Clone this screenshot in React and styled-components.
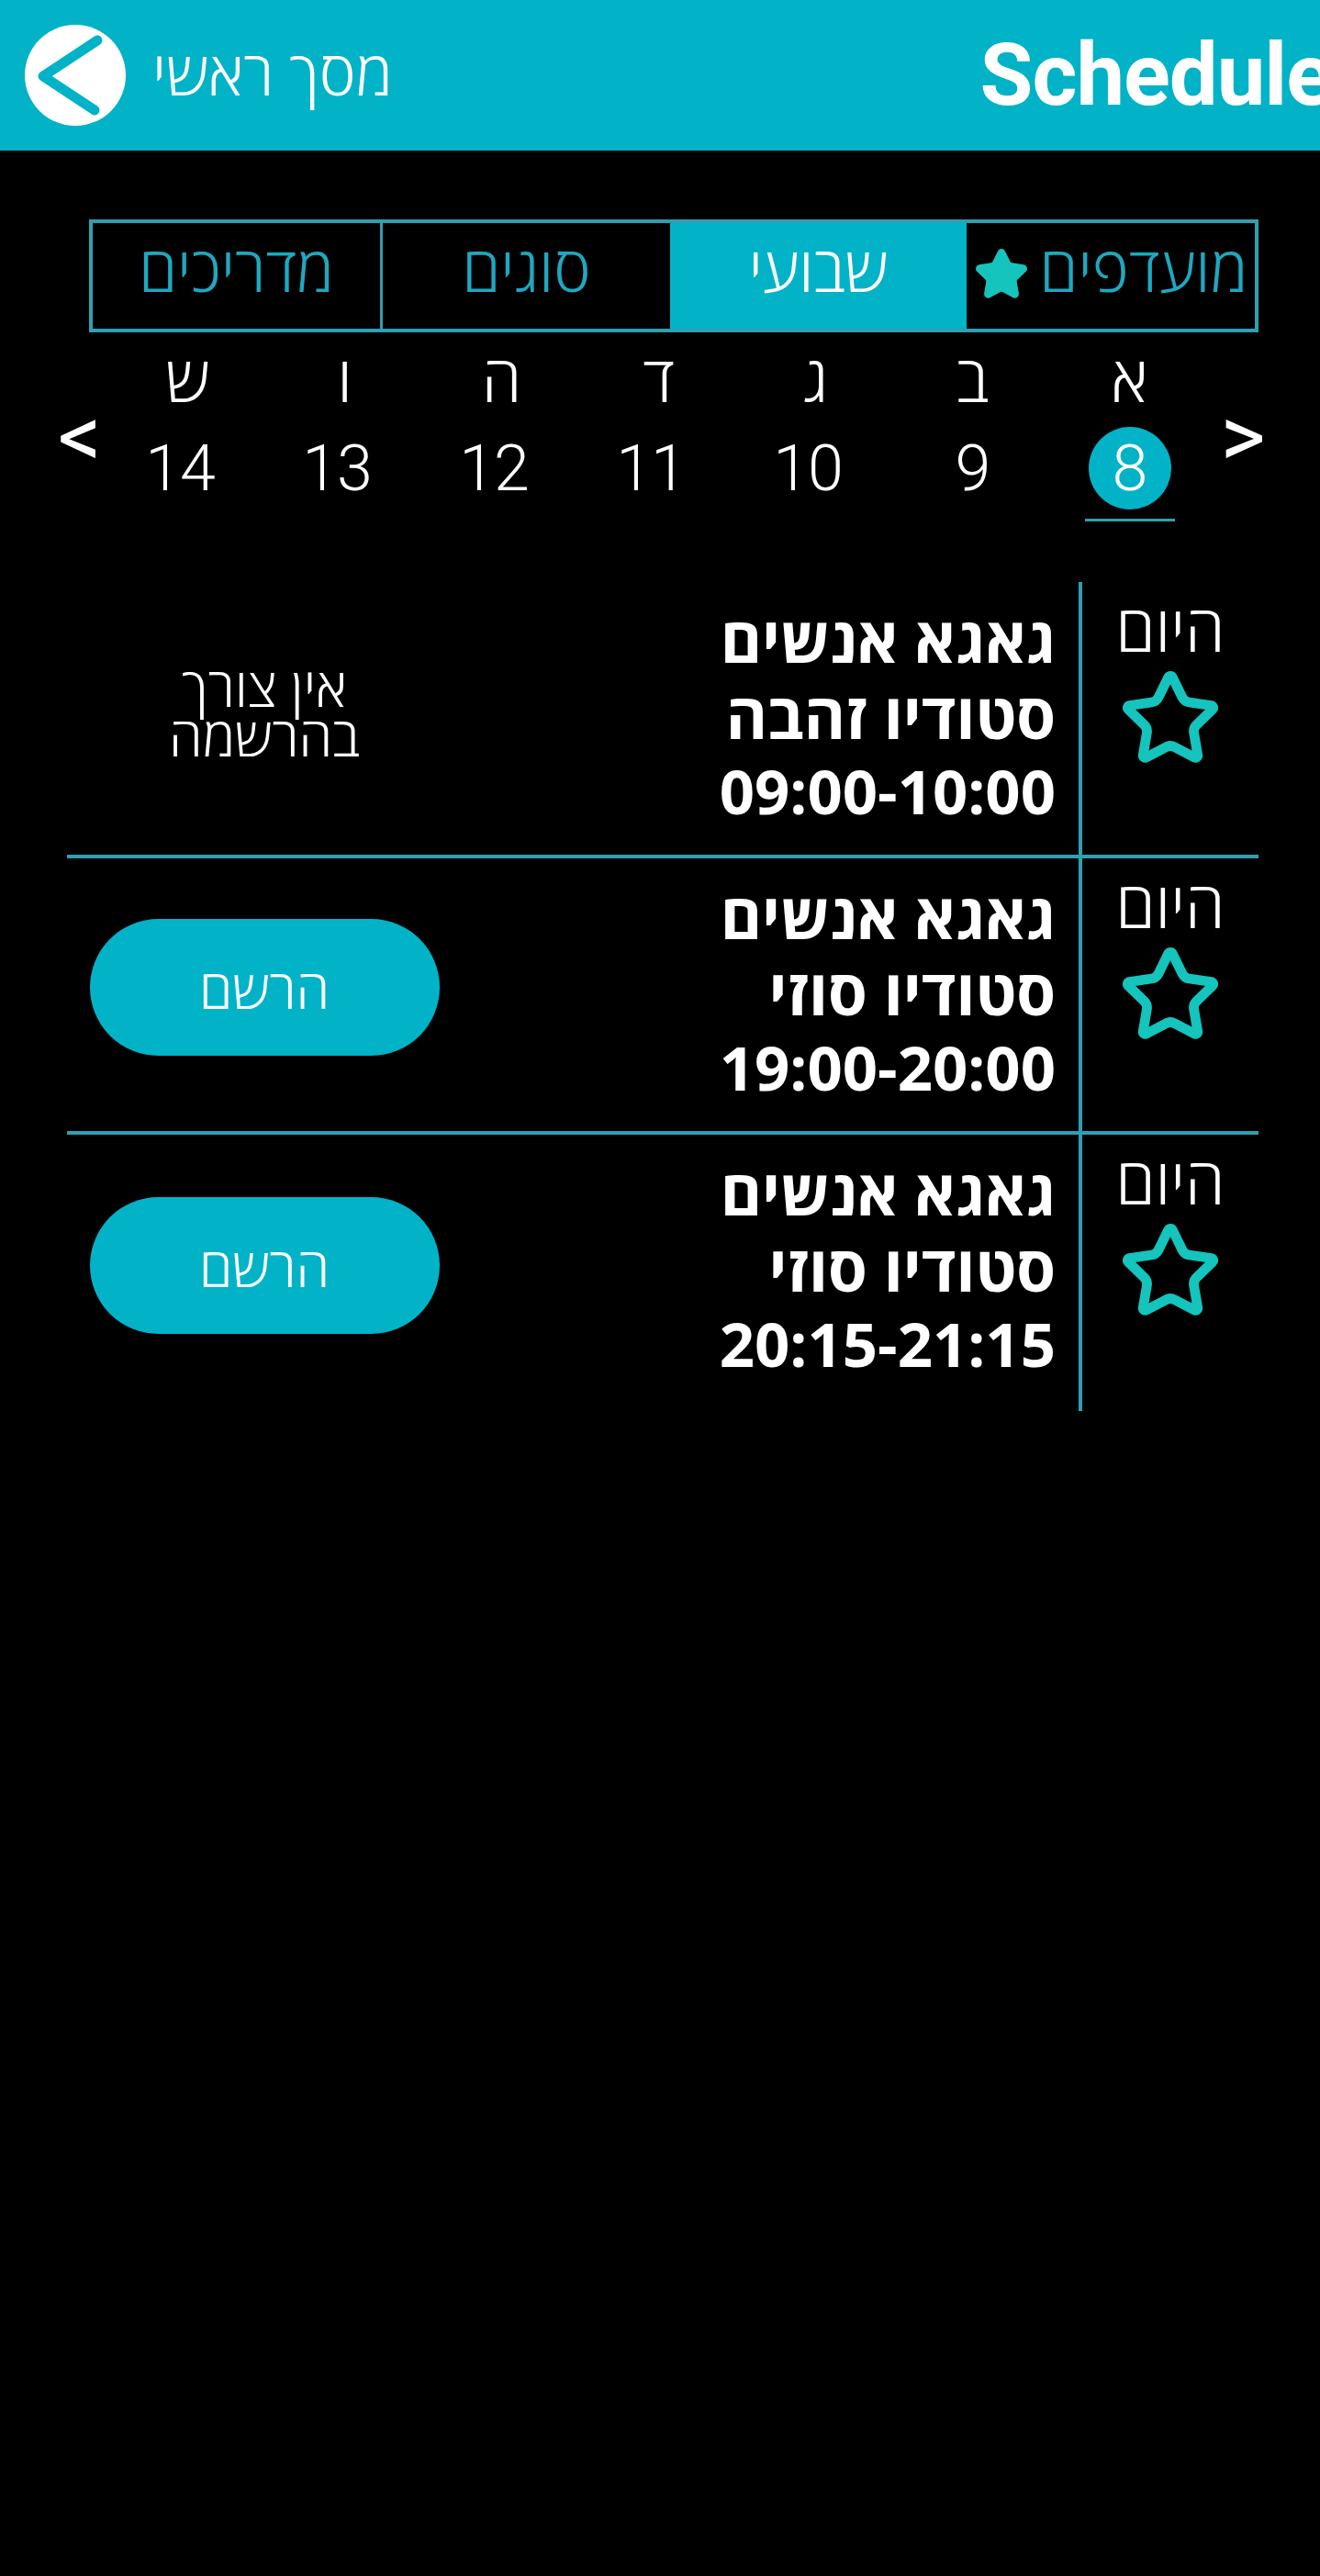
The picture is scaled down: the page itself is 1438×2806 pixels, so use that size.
import styled, { createGlobalStyle } from "styled-components"
import { Star } from "lucide-react"

const CYAN = "#02b3c7"
const LINE = "#2f9fb3"
const STAR = "#14c4bd"
const HEBREW = `"Open Sans", "Noto Sans", sans-serif`

const GlobalStyle = createGlobalStyle`
    html, body {
        margin: 0;
        background: #000;
        color: #fff;
    }
    body {
        font-family: ${HEBREW};
    }
`

const days = [
    { letter: "א", date: 8, today: true },
    { letter: "ב", date: 9 },
    { letter: "ג", date: 10 },
    { letter: "ד", date: 11 },
    { letter: "ה", date: 12 },
    { letter: "ו", date: 13 },
    { letter: "ש", date: 14 },
]

const classes = [
    { name: "גאגא אנשים", studio: "סטודיו זהבה", time: "09:00-10:00", free: true },
    { name: "גאגא אנשים", studio: "סטודיו סוזי", time: "19:00-20:00" },
    { name: "גאגא אנשים", studio: "סטודיו סוזי", time: "20:15-21:15" },
]

export default function App() {
    return (
        <Page>
            <GlobalStyle />
            <Header>
                <BackLink>
                    <BackCircle>
                        <svg width="110" height="110" viewBox="0 0 110 110">
                            <path d="M79 17 L20 56 L76 93" fill="none" stroke={CYAN} strokeWidth="11" strokeLinecap="round" strokeLinejoin="round" />
                        </svg>
                    </BackCircle>
                    <BackLabel>מסך ראשי</BackLabel>
                </BackLink>
                <Title>Schedule</Title>
            </Header>

            <Tabs>
                <Tab>
                    מועדפים
                    <TabStar size={60} fill={STAR} color={STAR} strokeWidth={2.4} />
                </Tab>
                <Tab $active>שבועי</Tab>
                <Tab>סוגים</Tab>
                <Tab>מדריכים</Tab>
            </Tabs>

            <Week>
                <Arrow>&gt;</Arrow>
                <Days>
                    {days.map(day => (
                        <Day key={day.date}>
                            <DayLetter>{day.letter}</DayLetter>
                            <DayDate $today={day.today} $wide={day.date > 9}>{day.date}</DayDate>
                            <DayMark $today={day.today} />
                        </Day>
                    ))}
                </Days>
                <Arrow>&lt;</Arrow>
            </Week>

            <List>
                {classes.map(item => (
                    <Row key={item.time}>
                        <TodayCell>
                            <TodayLabel>היום</TodayLabel>
                            <Star size={112} color={STAR} strokeWidth={2.3} />
                        </TodayCell>
                        <Info>
                            <div>{item.name}</div>
                            <div>{item.studio}</div>
                            <TimeLine>{item.time}</TimeLine>
                        </Info>
                        <Action>
                            {item.free
                                ? <FreeNote>אין צורך<br />בהרשמה</FreeNote>
                                : <RegisterBtn>הרשם</RegisterBtn>}
                        </Action>
                    </Row>
                ))}
            </List>
        </Page>
    )
}

const Page = styled.div`
    width: 1438px;
    height: 2806px;
    overflow: hidden;
    background: #000;
`

const Header = styled.header`
    display: flex;
    align-items: center;
    justify-content: space-between;
    height: 164px;
    padding-left: 27px;
    box-sizing: border-box;
    background: ${CYAN};
    overflow: hidden;
`

const BackLink = styled.div`
    display: flex;
    align-items: center;
    gap: 29px;
    flex-shrink: 0;
`

const BackCircle = styled.div`
    width: 110px;
    height: 110px;
    border-radius: 50%;
    background: #fff;
    svg {
        display: block;
    }
`

const BackLabel = styled.div`
    direction: rtl;
    font-size: 67px;
    font-weight: 300;
    margin-top: -8px;
`

const Title = styled.div`
    font-family: Roboto, sans-serif;
    font-weight: 700;
    font-size: 94px;
    letter-spacing: -1px;
    white-space: nowrap;
    margin-right: -13px;
`

const Tabs = styled.div`
    direction: rtl;
    display: grid;
    grid-template-columns: 314px 323px 316px 1fr;
    width: 1274px;
    height: 123px;
    margin: 75px 0 0 97px;
    box-sizing: border-box;
    border: 4px solid ${LINE};
`

const Tab = styled.div`
    display: flex;
    align-items: center;
    justify-content: center;
    gap: 12px;
    padding-bottom: 18px;
    box-sizing: border-box;
    font-size: 68px;
    font-weight: 300;
    white-space: nowrap;
    color: ${p => p.$active ? "#fff" : "#1ea8c0"};
    background: ${p => p.$active ? CYAN : "transparent"};
    border-left: ${p => p.$active ? "none" : `3px solid ${LINE}`};
    &:last-child {
        border-left: none;
    }
    &:nth-child(1) {
        border-left: none;
    }
`

const TabStar = styled(Star)`
    margin-top: 14px;
    flex-shrink: 0;
`

const Week = styled.div`
    direction: rtl;
    display: flex;
    align-items: flex-start;
    padding: 0 52px 0 55px;
    margin-top: 14px;
`

const Arrow = styled.div`
    direction: ltr;
    width: 64px;
    text-align: center;
    font-family: Roboto, sans-serif;
    font-weight: 400;
    font-size: 94px;
    line-height: 100px;
    margin-top: 50px;
    flex-shrink: 0;
`

const Days = styled.div`
    flex: 1;
    display: grid;
    grid-template-columns: repeat(7, 171px);
    justify-content: end;
`

const Day = styled.div`
    display: flex;
    flex-direction: column;
    align-items: center;
`

const DayLetter = styled.div`
    font-size: 70px;
    font-weight: 300;
    line-height: 84px;
    margin-top: -7px;
`

const DayDate = styled.div`
    width: 90px;
    height: 90px;
    box-sizing: border-box;
    padding-right: ${p => p.$wide ? "17px" : "0"};
    border-radius: 50%;
    display: flex;
    align-items: center;
    justify-content: center;
    margin-top: 12px;
    font-family: Roboto, sans-serif;
    font-weight: 350;
    font-size: 70px;
    letter-spacing: -1px;
    white-space: nowrap;
    background: ${p => p.$today ? CYAN : "transparent"};
`

const DayMark = styled.div`
    width: 98px;
    height: 3px;
    margin-top: 10px;
    background: ${p => p.$today ? LINE : "transparent"};
`

const List = styled.div`
    direction: rtl;
    width: 1298px;
    margin: 66px 0 0 73px;
`

const Row = styled.div`
    display: flex;
    height: 301px;
    box-sizing: border-box;
    border-bottom: 4px solid ${LINE};
    &:last-child {
        border-bottom: none;
    }
`

const TodayCell = styled.div`
    width: 196px;
    flex-shrink: 0;
    box-sizing: border-box;
    border-left: 4px solid ${LINE};
    display: flex;
    flex-direction: column;
    align-items: center;
`

const TodayLabel = styled.div`
    font-size: 70px;
    font-weight: 300;
    line-height: 60px;
    margin-top: 19px;
    margin-bottom: 14px;
`

const Info = styled.div`
    flex: 1;
    padding: 20px 25px 0 0;
    font-size: 69px;
    font-weight: 700;
    line-height: 83px;
`

const TimeLine = styled.div`
    font-size: 67px;
`

const Action = styled.div`
    width: 430px;
    flex-shrink: 0;
    display: flex;
    align-items: center;
    justify-content: center;
    padding-bottom: 16px;
    box-sizing: border-box;
`

const FreeNote = styled.div`
    text-align: center;
    font-size: 59px;
    font-weight: 300;
    line-height: 54px;
    margin-top: -2px;
`

const RegisterBtn = styled.button`
    width: 381px;
    height: 149px;
    border: none;
    border-radius: 75px;
    background: ${CYAN};
    color: #fff;
    font-family: inherit;
    font-size: 59px;
    font-weight: 300;
`
